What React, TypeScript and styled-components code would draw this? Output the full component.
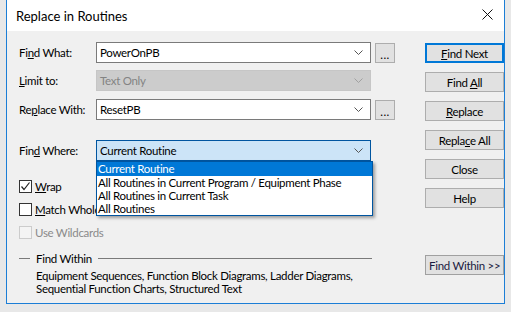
import React from 'react';
import styled, { createGlobalStyle } from 'styled-components';

const GlobalStyle = createGlobalStyle`
  html, body { margin: 0; padding: 0; }
  body {
    background: #e8e8e8;
    font-family: "Segoe UI", Lato, "Noto Sans", sans-serif;
    font-size: 11.5px;
    letter-spacing: -0.3px;
    color: #000;
  }
`;

const Chevron: React.FC = () => (
  <svg width="9" height="5" viewBox="0 0 9 5">
    <path d="M0.5 0.5 L4.5 4.5 L8.5 0.5" fill="none" stroke="#555" strokeWidth="1" />
  </svg>
);

const Check: React.FC = () => (
  <svg width="11" height="11" viewBox="0 0 11 11">
    <path d="M1.5 5.5 L4 8.5 L9.5 1.5" fill="none" stroke="#222" strokeWidth="1.2" />
  </svg>
);

const App: React.FC = () => {
  return (
    <Page>
      <GlobalStyle />
      <Window>
        <TitleBar>
          <Title>Replace in Routines</Title>
          <CloseX>
            <svg width="11" height="11" viewBox="0 0 11 11">
              <path d="M0.5 0.5 L10.5 10.5 M10.5 0.5 L0.5 10.5" stroke="#111" strokeWidth="1" />
            </svg>
          </CloseX>
        </TitleBar>
        <Body>
          <Form>
            <Row top={11}>
              <Label>Fi<u>n</u>d What:</Label>
              <Combo>
                <ComboText>PowerOnPB</ComboText>
                <Chevron />
              </Combo>
              <Dots>...</Dots>
            </Row>
            <Row top={7}>
              <Label><u>L</u>imit to:</Label>
              <Combo disabled>
                <ComboText>Text Only</ComboText>
                <Chevron />
              </Combo>
            </Row>
            <Row top={8}>
              <Label>Re<u>p</u>lace With:</Label>
              <Combo>
                <ComboText>ResetPB</ComboText>
                <Chevron />
              </Combo>
              <Dots>...</Dots>
            </Row>
            <Row top={20}>
              <Label>Fin<u>d</u> Where:</Label>
              <Combo focused>
                <ComboText>Current Routine</ComboText>
                <Chevron />
                <DropList>
                  <DropItem selected>Current Routine</DropItem>
                  <DropItem>All Routines in Current Program / Equipment Phase</DropItem>
                  <DropItem>All Routines in Current Task</DropItem>
                  <DropItem>All Routines</DropItem>
                </DropList>
              </Combo>
            </Row>
            <Checks>
              <CheckRow>
                <Box><Check /></Box>
                <span><u>W</u>rap</span>
              </CheckRow>
              <CheckRow>
                <Box />
                <span><u>M</u>atch Whole Word Only</span>
              </CheckRow>
              <CheckRow disabled>
                <Box disabled />
                <span>Use Wildcards</span>
              </CheckRow>
            </Checks>
            <Group>
              <GroupHead>
                <GroupRule short />
                <span>Find Within</span>
                <GroupRule />
              </GroupHead>
              <GroupText>
                Equipment Sequences, Function Block Diagrams, Ladder Diagrams,<br />
                Sequential Function Charts, Structured Text
              </GroupText>
            </Group>
          </Form>
          <Buttons>
            <Button primary><span><u>F</u>ind Next</span></Button>
            <Button><span>Find <u>A</u>ll</span></Button>
            <Button><span><u>R</u>eplace</span></Button>
            <Button><span>Repla<u>c</u>e All</span></Button>
            <Button><span>Close</span></Button>
            <Button><span>Help</span></Button>
            <WithinButton><span>Find Within &gt;&gt;</span></WithinButton>
          </Buttons>
        </Body>
      </Window>
    </Page>
  );
};

const Page = styled.div`
  width: 511px;
  height: 312px;
  overflow: hidden;
  padding-left: 6px;
  box-sizing: border-box;
`;

const Window = styled.div`
  width: 499px;
  height: 304px;
  box-sizing: border-box;
  border: 1px solid #1c7ed6;
  border-top: none;
  background: #f0f0f0;
  display: flex;
  flex-direction: column;
`;

const TitleBar = styled.div`
  height: 31px;
  background: #fff;
  display: flex;
  align-items: center;
  justify-content: space-between;
  padding: 0 11px 0 9px;
  flex-shrink: 0;
`;

const Title = styled.div`
  font-size: 13px;
  letter-spacing: 0;
  padding-top: 1px;
`;

const CloseX = styled.div`
  display: flex;
  padding-bottom: 2px;
`;

const Body = styled.div`
  flex: 1;
  display: flex;
  padding-left: 12px;
`;

const Form = styled.div`
  width: 394px;
  display: flex;
  flex-direction: column;
`;

const Row = styled.div<{ top: number }>`
  display: flex;
  align-items: center;
  margin-top: ${(p) => p.top}px;
  height: 21px;
`;

const Label = styled.div`
  width: 77px;
  flex-shrink: 0;
`;

const Combo = styled.div<{ disabled?: boolean; focused?: boolean }>`
  position: relative;
  width: 275px;
  height: 21px;
  box-sizing: border-box;
  display: flex;
  align-items: center;
  justify-content: space-between;
  padding: 0 7px 0 3px;
  border: 1px solid ${(p) => (p.focused ? '#0055a0' : p.disabled ? '#c6c6c6' : '#7a7a7a')};
  background: ${(p) => (p.focused ? '#cce4f7' : p.disabled ? '#cccccc' : '#fff')};
  color: ${(p) => (p.disabled ? '#838383' : '#000')};
  svg path { stroke: ${(p) => (p.disabled ? '#a0a0a0' : '#555')}; }
`;

const ComboText = styled.span`
  white-space: nowrap;
`;

const Dots = styled.div`
  width: 20px;
  height: 20px;
  margin-left: 4px;
  box-sizing: border-box;
  border: 1px solid #adadad;
  background: #e1e1e1;
  display: flex;
  align-items: flex-end;
  justify-content: center;
  line-height: 14px;
  letter-spacing: 0.5px;
`;

const DropList = styled.div`
  position: absolute;
  top: 20px;
  left: -1px;
  width: 277px;
  height: 55px;
  box-sizing: border-box;
  border: 1px solid #0055a0;
  background: #fff;
  color: #000;
  box-shadow: 2px 2px 3px rgba(0, 0, 0, 0.35);
  z-index: 2;
`;

const DropItem = styled.div<{ selected?: boolean }>`
  height: 13px;
  line-height: 13px;
  padding-left: 1px;
  white-space: nowrap;
  background: ${(p) => (p.selected ? '#0078d7' : 'transparent')};
  color: ${(p) => (p.selected ? '#fff' : '#000')};
  &:first-child { height: 14px; line-height: 14px; }
`;

const Checks = styled.div`
  display: flex;
  flex-direction: column;
  gap: 10px;
  margin-top: 19px;
`;

const CheckRow = styled.div<{ disabled?: boolean }>`
  display: flex;
  align-items: center;
  gap: 3px;
  height: 13px;
  white-space: nowrap;
  color: ${(p) => (p.disabled ? '#8a8a8a' : '#000')};
`;

const Box = styled.div<{ disabled?: boolean }>`
  width: 13px;
  height: 13px;
  box-sizing: border-box;
  border: 1px solid ${(p) => (p.disabled ? '#cccccc' : '#333')};
  background: ${(p) => (p.disabled ? '#f4f4f4' : '#fff')};
  display: flex;
  align-items: center;
  justify-content: center;
`;

const Group = styled.div`
  margin-top: 12px;
`;

const GroupHead = styled.div`
  display: flex;
  align-items: center;
  gap: 6px;
  height: 14px;
`;

const GroupRule = styled.div<{ short?: boolean }>`
  height: 1px;
  background: #7a7a7a;
  width: ${(p) => (p.short ? '11px' : '274px')};
`;

const GroupText = styled.div`
  padding-left: 17px;
  margin-top: 5px;
  line-height: 12.5px;
  white-space: nowrap;
`;

const Buttons = styled.div`
  display: flex;
  flex-direction: column;
  gap: 9px;
  margin-left: 19px;
  padding-top: 12px;
`;

const Button = styled.div<{ primary?: boolean }>`
  width: 79px;
  height: 20px;
  box-sizing: border-box;
  border: ${(p) => (p.primary ? '2px solid #0078d7' : '1px solid #adadad')};
  background: #e1e1e1;
  display: flex;
  align-items: center;
  justify-content: center;
  white-space: nowrap;
`;

const WithinButton = styled(Button)`
  margin-top: 38px;
  border-color: #a0a0a0;
  color: #1a1a40;
  justify-content: flex-start;
  padding-left: 3px;
`;

export default App;
